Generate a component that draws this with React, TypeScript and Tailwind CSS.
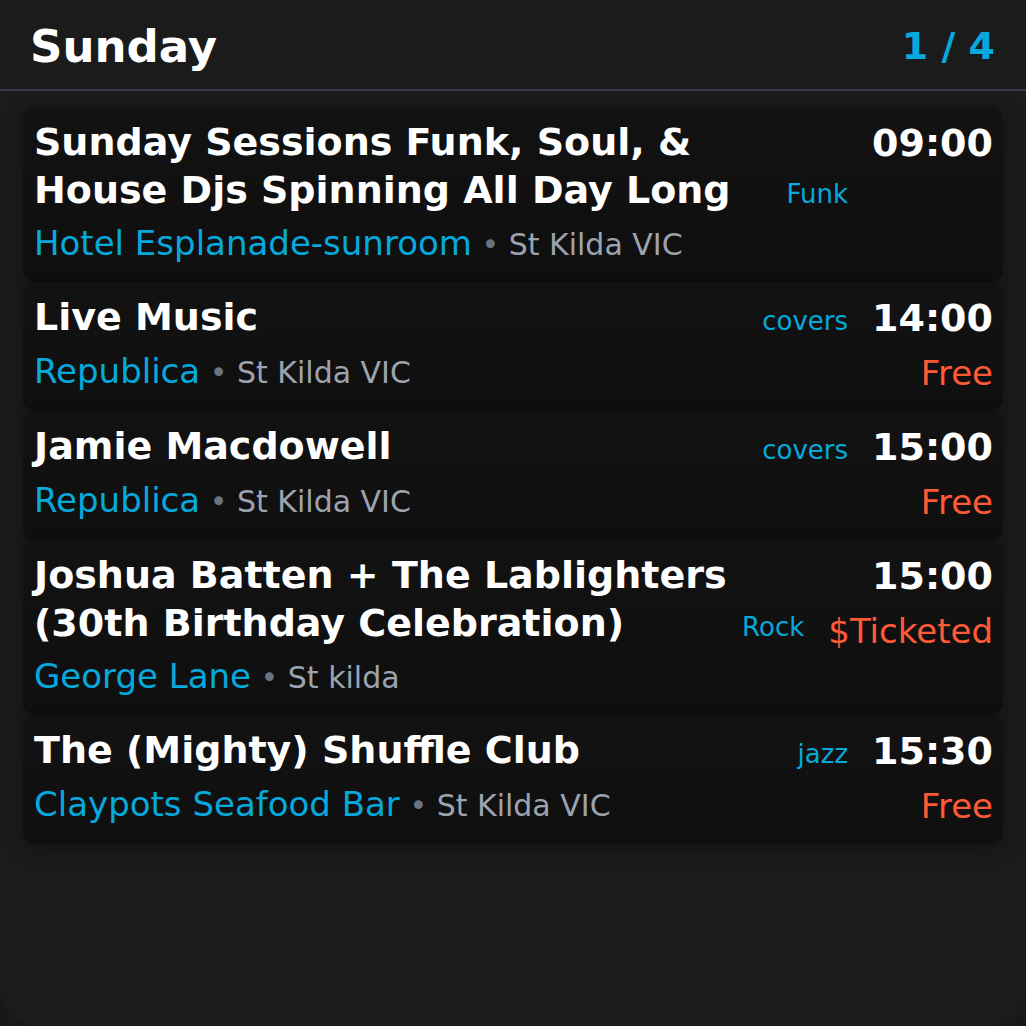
import React from "react";

type Ev = {
  title: string;
  venue: string;
  suburb: string;
  genre: string;
  time: string;
  price?: string;
};

const events: Ev[] = [
  {
    title: "Sunday Sessions Funk, Soul, & House Djs Spinning All Day Long",
    venue: "Hotel Esplanade-sunroom",
    suburb: "St Kilda VIC",
    genre: "Funk",
    time: "09:00",
  },
  { title: "Live Music", venue: "Republica", suburb: "St Kilda VIC", genre: "covers", time: "14:00", price: "Free" },
  { title: "Jamie Macdowell", venue: "Republica", suburb: "St Kilda VIC", genre: "covers", time: "15:00", price: "Free" },
  {
    title: "Joshua Batten + The Lablighters (30th Birthday Celebration)",
    venue: "George Lane",
    suburb: "St kilda",
    genre: "Rock",
    time: "15:00",
    price: "$Ticketed",
  },
  {
    title: "The (Mighty) Shuffle Club",
    venue: "Claypots Seafood Bar",
    suburb: "St Kilda VIC",
    genre: "jazz",
    time: "15:30",
    price: "Free",
  },
];

function Card({ ev }: { ev: Ev }) {
  return (
    <div className="flex gap-6 items-start rounded-xl bg-gradient-to-b from-[#121212] to-[#0f0f0f] pl-[11px] pr-[10px] py-3 shadow-[0_4px_18px_rgba(0,0,0,0.35)]">
      <div className="flex-1 min-w-0 flex flex-col">
        <div className="flex gap-2 [align-items:last_baseline]">
          <div className="flex-1 min-w-0 text-[38px] font-bold leading-[47.5px] text-white">{ev.title}</div>
          <div className="shrink-0 text-[26px] leading-[39px] text-[#05a9dc]">{ev.genre}</div>
        </div>
        <div className="mt-1 text-[34px] leading-[51px] text-[#05a9dc] whitespace-nowrap">
          {ev.venue}
          <span className="text-[30px] text-[#9ca3af]">
            {" "}
            <span className="text-[#6b7280]">•</span> {ev.suburb}
          </span>
        </div>
      </div>
      <div className="shrink-0 flex flex-col items-end">
        <div className="text-[38px] font-bold leading-[48px] text-white">{ev.time}</div>
        {ev.price && <div className="mt-[6px] text-[34px] leading-[51px] text-[#ff5a36]">{ev.price}</div>}
      </div>
    </div>
  );
}

export default function App() {
  return (
    <div className="w-[1026px] h-[1026px] bg-[#181818] overflow-hidden" style={{ fontFamily: '"DejaVu Sans", "Liberation Sans", sans-serif' }}>
      <div className="h-full w-full rounded-b-[36px] bg-[#1b1b1b] flex flex-col">
        <div className="h-[91px] flex items-center justify-between pl-[30px] pr-[31px] pt-1 border-b-2 border-[#363b46]">
          <div className="text-[45px] font-bold text-white">Sunday</div>
          <div className="text-[38px] font-bold text-[#05a9dc]">1 / 4</div>
        </div>
        <div className="flex flex-col px-[23px] pt-4">
          {events.map((ev, i) => (
            <Card key={i} ev={ev} />
          ))}
        </div>
      </div>
    </div>
  );
}
